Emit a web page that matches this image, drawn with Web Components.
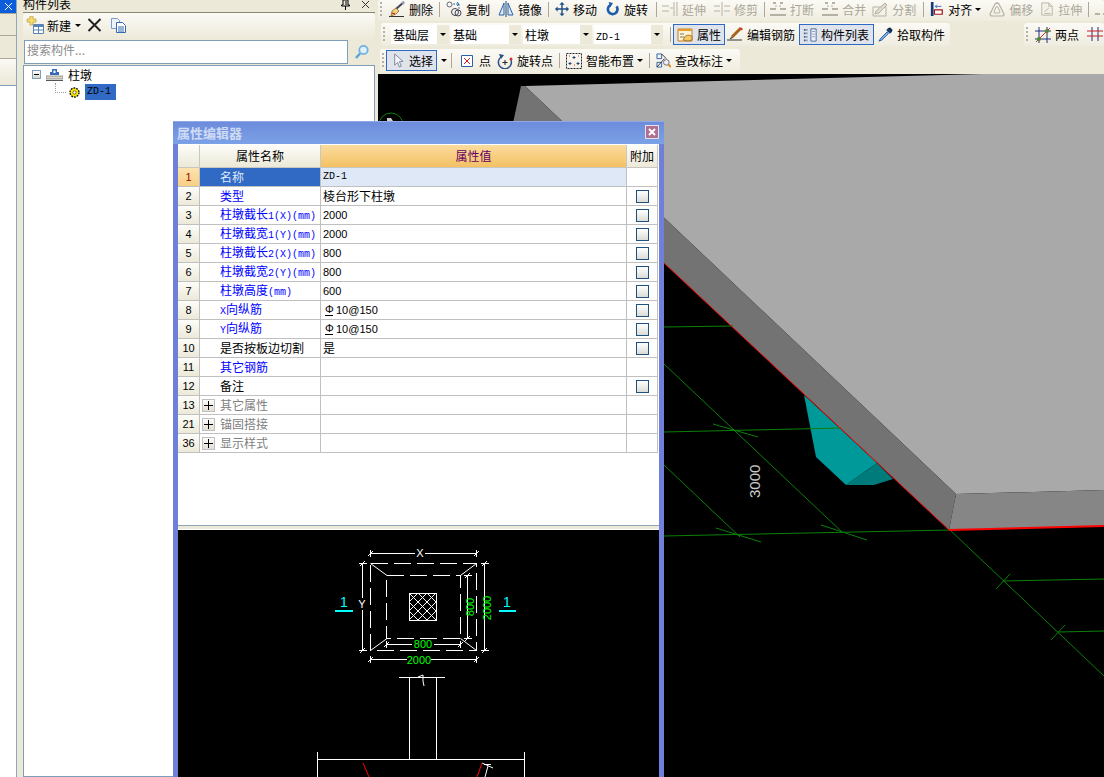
<!DOCTYPE html>
<html lang="zh">
<head>
<meta charset="utf-8">
<title>属性编辑器</title>
<style>
  html, body { margin: 0; height: 100%; overflow: hidden; background: #ece9d8; }
  body { font: 12px "Noto Sans CJK SC", "Liberation Sans", sans-serif; color: #000; }
</style>
</head>
<body>
<app-shell>
  <side-strip slot="strip"></side-strip>
  <tree-panel slot="tree"></tree-panel>
  <main-area slot="main">
    <tool-row style="margin-bottom:2px">
      <tool-bar style="flex:1;height:21px;padding-bottom:3px">
        <tool-btn icon="erase" label="删除"></tool-btn><tool-sep></tool-sep>
        <tool-btn icon="copy" label="复制"></tool-btn>
        <tool-btn icon="mirror" label="镜像"></tool-btn><tool-sep></tool-sep>
        <tool-btn icon="move" label="移动" iw="14"></tool-btn>
        <tool-btn icon="rotate" label="旋转" iw="14" style="margin-left:1px"></tool-btn><tool-sep style="margin:0 1px 0 4px"></tool-sep>
        <tool-btn icon="extend" label="延伸" off></tool-btn>
        <tool-btn icon="trim" label="修剪" off></tool-btn><tool-sep></tool-sep>
        <tool-btn icon="cut" label="打断" off style="margin-left:-1px"></tool-btn>
        <tool-btn icon="cut" label="合并" off></tool-btn>
        <tool-btn icon="split" label="分割" off style="margin-left:-2px"></tool-btn><tool-sep style="margin-left:3px"></tool-sep>
        <tool-btn icon="align" label="对齐" iw="14" caret></tool-btn>
        <tool-btn icon="offset" label="偏移" off></tool-btn>
        <tool-btn icon="stretch" label="拉伸" iw="14" off style="margin-left:-1px"></tool-btn><tool-sep></tool-sep>
        <tool-btn icon="stub" off></tool-btn>
      </tool-bar>
    </tool-row>
    <tool-row style="margin-bottom:3px">
      <tool-bar style="width:569px;height:23px;margin-left:3px">
        <tb-combo text="基础层" w="46"></tb-combo>
        <tb-combo text="基础" w="58"></tb-combo>
        <tb-combo text="柱墩" w="57"></tb-combo>
        <tb-combo text="ZD-1" w="57"></tb-combo>
        <tool-sep style="margin:0 2px 0 5px"></tool-sep>
        <tool-btn icon="attr" label="属性" on></tool-btn>
        <tool-btn icon="rebar" label="编辑钢筋" style="margin-left:-2px"></tool-btn>
        <tool-btn icon="list" label="构件列表" iw="14" on style="width:75px"></tool-btn>
        <tool-btn icon="pick" label="拾取构件" iw="15"></tool-btn>
      </tool-bar>
      <tool-bar style="margin-left:74px;flex:1;height:23px">
        <tool-btn icon="twopt" label="两点"></tool-btn>
        <tool-btn icon="grid" label=""></tool-btn>
      </tool-bar>
    </tool-row>
    <tool-row style="margin-bottom:1px">
      <tool-bar style="width:360px;height:24px;margin-left:2px;padding-bottom:1px">
        <tool-btn icon="arrow" label="选择" on iw="15" style="margin-left:-1px"></tool-btn>
        <span style="width:0;height:0;margin:0 2px 0 4px;border:solid transparent;border-width:3px 3px 0;border-top-color:#000"></span>
        <tool-sep></tool-sep>
        <tool-btn icon="point" label="点" style="margin-left:1px"></tool-btn>
        <tool-btn icon="rotpt" label="旋转点" style="margin-left:-2px"></tool-btn><tool-sep></tool-sep>
        <tool-btn icon="smart" label="智能布置" caret></tool-btn><tool-sep></tool-sep>
        <tool-btn icon="inspect" label="查改标注" iw="15" caret></tool-btn>
      </tool-bar>
    </tool-row>
    <cad-view></cad-view>
  </main-area>
  <prop-dialog slot="dialog" title="属性编辑器">
    <prop-row num="1" name="名称" val="ZD-1" tone="sel"></prop-row>
    <prop-row num="2" name="类型" val="棱台形下柱墩" tone="link" check></prop-row>
    <prop-row num="3" name="柱墩截长1(X)(mm)" val="2000" tone="link" check></prop-row>
    <prop-row num="4" name="柱墩截宽1(Y)(mm)" val="2000" tone="link" check></prop-row>
    <prop-row num="5" name="柱墩截长2(X)(mm)" val="800" tone="link" check></prop-row>
    <prop-row num="6" name="柱墩截宽2(Y)(mm)" val="800" tone="link" check></prop-row>
    <prop-row num="7" name="柱墩高度(mm)" val="600" tone="link" check></prop-row>
    <prop-row num="8" name="X向纵筋" val="Φ10@150" tone="link" check></prop-row>
    <prop-row num="9" name="Y向纵筋" val="Φ10@150" tone="link" check></prop-row>
    <prop-row num="10" name="是否按板边切割" val="是" check></prop-row>
    <prop-row num="11" name="其它钢筋" tone="link"></prop-row>
    <prop-row num="12" name="备注" check></prop-row>
    <prop-row num="13" name="其它属性" tone="group"></prop-row>
    <prop-row num="21" name="锚固搭接" tone="group"></prop-row>
    <prop-row num="36" name="显示样式" tone="group"></prop-row>
    <cad-preview slot="preview"></cad-preview>
  </prop-dialog>
</app-shell>

<script>
// small latin runs are 10px mono, same cell width as the old bitmap font
const latin = (s) => s.replace(/[\x21-\x7e]+/g, (m) => `<span class="l">${m}</span>`);

const gray = "#b5b2a4";
const svg16 = (body) => `<svg viewBox="0 0 16 16" width="16" height="16" fill="none">${body}</svg>`;
const ICONS = {
  erase: svg16(`<path d="M0 15.5h15" stroke="#333"/><path d="M15 1 7 8" stroke="#445" stroke-width="2"/><path d="M7 7l3 3-3 3-5 2 1-5z" fill="#f2d27a" stroke="#7a5a20" stroke-width=".7"/><path d="M3 12l3 1" stroke="#c03" /><path d="M13 1l2 2" stroke="#9ab" stroke-width="2"/>`),
  copy: svg16(`<circle cx="3.5" cy="3.5" r="2.5" stroke="#667"/><circle cx="9" cy="11" r="3.5" stroke="#445"/><circle cx="12" cy="12" r="3" stroke="#445"/><path d="M7 3h6M13 3v5" stroke="#37a" stroke-dasharray="2 1"/><path d="M11 1l2 2-2 2" stroke="#37a"/>`),
  mirror: svg16(`<path d="M8 0v16" stroke="#246"/><path d="M6 2v12H1z" stroke="#2a62a8" fill="#dfe9f6"/><path d="M10 2v12h5z" stroke="#2a62a8" fill="#dfe9f6"/>`),
  move: svg16(`<path d="M8 1v14M1 8h14" stroke="#1f4f86" stroke-width="1.6"/><path d="M8 0l3 3H5zM8 16l3-3H5zM0 8l3-3v6zM16 8l-3-3v6z" fill="#1f4f86"/>`),
  rotate: svg16(`<path d="M5 3.5A5.5 5.5 0 1 0 12 5" stroke="#1c5cab" stroke-width="3"/><path d="M3 0l5 1-3 5z" fill="#1c5cab"/>`),
  extend: svg16(`<path d="M0 5h7M0 10h7M12 1v14M15 1v14M8 7h3" stroke="${gray}"/>`),
  trim: svg16(`<path d="M0 5h6M0 10h6M10 5h6M10 10h6M8 1v14" stroke="${gray}"/>`),
  cut: svg16(`<path d="M0 8h6M10 8h6M0 14h16" stroke="${gray}" stroke-width="2"/><path d="M3 2h3M10 2h3" stroke="${gray}" stroke-width="2"/><path d="M6 4v2M10 4v2" stroke="${gray}"/>`),
  split: svg16(`<path d="M1 6h13v9H1z" stroke="${gray}"/><path d="M4 10 13 2l2 2-8 8-4 1z" fill="#dedbcc" stroke="${gray}"/>`),
  align: svg16(`<path d="M1 0h3v16H1z" fill="#123a78"/><path d="M5 14V9h9v5z" fill="#fff" stroke="#a01818" stroke-width="1.4"/><path d="M13 5H6M8 3 6 5l2 2" stroke="#2a62c8"/>`),
  offset: svg16(`<path d="M1 13 6 3q2-2 4 0l5 10q0 2-2 2H3q-2 0-2-2z" stroke="${gray}" stroke-width="1.2"/><path d="M5 11 7 6q1-1 2 0l2 5q0 1-1 1H6q-1 0-1-1z" stroke="${gray}"/>`),
  stretch: svg16(`<path d="M2 1h8l4 4v10H2z" fill="#f4f2e8" stroke="${gray}"/><path d="M10 1v4h4M5 11l5-4M5 13h7" stroke="${gray}"/>`),
  stub: svg16(`<path d="M0 13h5M8 13h2" stroke="${gray}" stroke-width="2"/>`),
  attr: svg16(`<path d="M1 2h14v12H1z" fill="#fdf3d7" stroke="#c77a1c"/><path d="M1 2h14v2H1z" fill="#e99c2e"/><path d="M3 7h4M3 10h4" stroke="#777"/><path d="M6 13q2-5 5-5l4 1v4l-4 1z" fill="#f4c964" stroke="#8a5a10" stroke-width=".7"/>`),
  rebar: svg16(`<path d="M0 13h15" stroke="#333"/><path d="M14 1 5 10" stroke="#a8641e" stroke-width="3"/><path d="M14 1l1 2" stroke="#d33" stroke-width="2"/><path d="M3 11l2-1 1 1-3 1z" fill="#222"/>`),
  list: svg16(`<path d="M9 1h6v14H9z" fill="#eef3fa" stroke="#3b5f93"/><path d="M1 2h4M1 6h4M1 10h4M1 14h4" stroke="#3b5f93" stroke-width="2" stroke-dasharray="2 1"/><path d="M10.500 4h3M10.500 7h3M10.500 10h3" stroke="#88a"/>`),
  pick: svg16(`<path d="M10 2 14 6" stroke="#0f3f7a" stroke-width="3.4"/><path d="M10 5 3 12l-2 3 3-1 7-7z" fill="#8ab4ea" stroke="#1f57a3"/><path d="M12 1l3 3" stroke="#222" stroke-width="2"/>`),
  twopt: svg16(`<path d="M4 0v16M12 0v16M0 4h16M0 12h16" stroke="#23317a"/><path d="M1 15 15 1" stroke="#d22"/><circle cx="4" cy="12" r="2" fill="#4c8a2e"/><circle cx="12" cy="4" r="2" fill="#4c8a2e"/>`),
  grid: svg16(`<path d="M5 0v14M11 0v14" stroke="#23317a"/><path d="M0 4h16M0 9h16" stroke="#c81e2a"/>`),
  arrow: svg16(`<path d="M5 1v12l3-3 2 5 2-1-2-5h4z" fill="#f3f5fa" stroke="#7b8496"/>`),
  point: svg16(`<path d="M2.500 2.500h11v11h-11z" fill="#fff" stroke="#2a62a8"/><path d="M5 5l6 6M11 5l-6 6" stroke="#d3202a"/>`),
  rotpt: svg16(`<path d="M4 4A6.500 6.500 0 1 0 14 7" stroke="#2a4f86" stroke-width="1.5"/><path d="M2 1l5 1-3 4z" fill="#2a4f86"/><path d="M8 7v5M5.500 9.500h5" stroke="#222"/><circle cx="14" cy="6" r="1.500" fill="#c33"/>`),
  smart: svg16(`<path d="M.5.500h15v15H.5z" stroke="#223" stroke-dasharray="2 1"/><path d="M8 3v3M6.500 4.500h3M4 9v3M2.500 10.500h3M12 9v3M10.500 10.500h3" stroke="#246"/><path d="M3 3h1M12 3h1M8 12h1" stroke="#c33"/>`),
  inspect: svg16(`<path d="M1 1h5v5H1zM1 10h5v5H1z" stroke="#2a62a8"/><path d="M6 1 11 6M1 15 9 6" stroke="#333"/><circle cx="11" cy="10" r="3" fill="#eef" stroke="#667"/><path d="M13 12l3 3" stroke="#d08a20" stroke-width="2"/>`),
};

class AppShell extends HTMLElement {
  constructor() {
    super();
    this.attachShadow({ mode: "open" }).innerHTML = `
      <style>
        :host { display: grid; grid-template-columns: 17px 6px 352px 3px 726px; width: 1104px; height: 777px; position: relative; overflow: hidden; background: #ece9d8; }
        .col { min-height: 0; height: 777px; overflow: hidden; }
        .dlg { position: absolute; left: 173px; top: 121px; }
      </style>
      <div class="col"><slot name="strip"></slot></div><div></div>
      <div class="col"><slot name="tree"></slot></div><div></div>
      <div class="col"><slot name="main"></slot></div>
      <div class="dlg"><slot name="dialog"></slot></div>`;
  }
}

class SideStrip extends HTMLElement {
  constructor() {
    super();
    this.attachShadow({ mode: "open" }).innerHTML = `
      <style>
        :host { display: flex; flex-direction: column; height: 777px; border-right: 1px solid #8fa8c0; box-sizing: border-box; }
        .x { height: 13px; background: #0b5ddc; color: #fff; display: flex; align-items: center; justify-content: center; }
        .tab { border-top: 1px solid #aca899; height: 21px; background: #ece9d8; box-sizing: content-box; }
        .tab3 { height: 26px; background: linear-gradient(#faf9f4, #ece9d8); }
        .rest { flex: 1; background: #fff; border-top: 1px solid #7f9db9; }
      </style>
      <div class="x"><svg width="9" height="9" viewBox="0 0 9 9"><path d="M1 1l7 7M8 1 1 8" stroke="#fff"/></svg></div>
      <div class="tab"></div><div class="tab" style="height:22px"></div>
      <div class="tab tab3"></div><div class="rest"></div>`;
  }
}

class TreePanel extends HTMLElement {
  constructor() {
    super();
    this.attachShadow({ mode: "open" }).innerHTML = `
      <style>
        :host { display: flex; flex-direction: column; height: 777px; }
        .head { height: 12px; overflow: hidden; border-bottom: 1px solid #8a8778; display: flex; justify-content: space-between; }
        .head span { margin-top: -4px; line-height: 16px; }
        .head div { display: flex; gap: 11px; padding-right: 5px; align-items: flex-start; }
        .bar { height: 27px; display: flex; align-items: center; padding: 0 0 3px 3px; box-sizing: border-box; background: linear-gradient(#fbfaf5, #ece9d8); border-radius: 4px 4px 0 0; }
        .bar span.t { margin: 0 4px 0 2px; }
        .caret { border: solid transparent; border-width: 3px 3px 0; border-top-color: #000; margin-right: 6px; }
        .search { height: 24px; display: flex; }
        .search .in { width: 324px; margin-left: 1px; box-sizing: border-box; border: 1px solid #7f9db9; background: #fff; color: #8c8c8c; padding: 0 2px; line-height: 18px; }
        .search .go { flex: 1; display: flex; align-items: center; justify-content: center; }
        .tree { flex: 1; margin-top: 1px; border: 1px solid #7f9db9; background: #fff; }
        .n { display: flex; align-items: center; height: 16px; }
        .n1 { margin-top: 1px; padding-left: 8px; height: 17px; }
        .n1 span { margin-top: -3px; }
        .box { width: 7px; height: 7px; border: 1px solid #7f9db9; background: linear-gradient(#fff, #d8d8cc); display: flex; align-items: center; justify-content: center; margin-top: -2px; }
        .box i { width: 5px; height: 1px; background: #000; }
        .n1 svg { margin: -3px 4px 0 5px; }
        .dots { width: 10px; height: 9px; margin: -9px 4px 0 31px; border: dotted #999; border-width: 0 0 1px 1px; }
        .sel { margin-left: 5px; width: 31px; height: 16px; background: #316ac5; padding-left: 2px; box-sizing: border-box; font: 10px/16px "Liberation Mono", monospace; }
      </style>
      <div class="head"><span>构件列表</span><div>
        <svg width="9" height="10" viewBox="0 0 9 10"><path d="M2 0h5v5h1.500v1h-8V5H2zM4.500 6v4M5 1v4" stroke="#000" fill="none"/></svg>
        <svg width="9" height="9" viewBox="0 0 9 9"><path d="M1 1l7 7M8 1 1 8" stroke="#333"/></svg>
      </div></div>
      <div class="bar">
        <svg width="18" height="18" viewBox="0 0 18 18"><path d="M4 0h3v3h3v3H7v3H4V6H1V3h3z" fill="#f7dc6a" stroke="#b09030" stroke-width=".6"/><path d="M7.500 8.500h10v9h-10z" fill="#fff" stroke="#5b83b5"/><path d="M8 9h9v2H8z" fill="#5b83b5"/><path d="M8 14h9M12.500 11v6" stroke="#5b83b5"/></svg>
        <span class="t" style="margin-left:3px">新建</span><span class="caret"></span>
        <svg width="15" height="14" viewBox="0 0 15 14" style="margin-right:9px"><path d="M1.500 1 13.500 13M13.500 1 1.500 13" stroke="#222" stroke-width="2"/></svg>
        <svg width="15" height="15" viewBox="0 0 15 15"><path d="M.5.500h6l2 2v8h-8z" fill="#eef3fb" stroke="#7a9bc9"/><path d="M5.500 4.500h6l3 3v7h-9z" fill="#fff" stroke="#3568b0"/><path d="M7 9h6M7 11h6M7 13h6" stroke="#3568b0"/></svg>
      </div>
      <div class="search"><div class="in">搜索构件...</div><div class="go">
        <svg width="16" height="16" viewBox="0 0 16 16"><circle cx="9.500" cy="6" r="4.200" fill="#dff0fb" stroke="#6fb0e2" stroke-width="1.800"/><path d="M6 9.500 2 14" stroke="#5ea2dc" stroke-width="2.400"/></svg>
      </div></div>
      <div class="tree">
        <div class="n n1"><div class="box"><i></i></div>
          <svg width="17" height="13" viewBox="0 0 17 13"><path d="M6 1h5v3h2v3H4V4h2z" fill="#3a68b8"/><path d="M7.500 2.500h2V5h-2z" fill="#fff"/><path d="M0 8h17v3H0z" fill="#d9d6c6" stroke="#777" stroke-width=".7"/><path d="M0 12.500h17" stroke="#555"/></svg>
          <span style="margin-left:1px">柱墩</span></div>
        <div class="n"><span class="dots"></span>
          <svg width="11" height="11" viewBox="0 0 11 11" style="margin-left:-1px"><circle cx="5.500" cy="5.500" r="4.500" fill="#ffe800" stroke="#111" stroke-width="1.400" stroke-dasharray="1.800 1"/><circle cx="5.500" cy="5.500" r="1.600" fill="#fff" stroke="#333" stroke-width=".7"/></svg>
          <span class="sel">ZD-1</span></div>
      </div>`;
  }
}

class MainArea extends HTMLElement {
  constructor() {
    super();
    this.attachShadow({ mode: "open" }).innerHTML = `
      <style>:host { display: flex; flex-direction: column; height: 777px; } </style><slot></slot>`;
  }
}

class ToolRow extends HTMLElement {
  constructor() {
    super();
    this.attachShadow({ mode: "open" }).innerHTML = `
      <style>:host { display: flex; align-items: stretch; }</style><slot></slot>`;
  }
}

class ToolBar extends HTMLElement {
  constructor() {
    super();
    this.attachShadow({ mode: "open" }).innerHTML = `
      <style>
        :host { display: flex; align-items: center; box-sizing: border-box; background: linear-gradient(#fbfaf5, #efecdf); border-radius: 3px; overflow: hidden; white-space: nowrap; }
        .grip { width: 2px; height: 15px; margin: 0 3px 0 2px; flex: none; background: repeating-linear-gradient(#b5b2a4 0 2px, transparent 2px 4px); }
      </style>
      <div class="grip"></div><slot></slot>`;
  }
}

class ToolSep extends HTMLElement {
  constructor() {
    super();
    this.attachShadow({ mode: "open" }).innerHTML = `
      <style>:host { display: block; flex: none; width: 1px; height: 15px; margin: 0 2px; background: #aca899; }</style>`;
  }
}

class ToolBtn extends HTMLElement {
  connectedCallback() {
    if (this.shadowRoot) return;
    const label = this.getAttribute("label");
    const iw = this.getAttribute("iw") || 16;
    this.attachShadow({ mode: "open" }).innerHTML = `
      <style>
        :host { display: flex; flex: none; align-items: center; gap: 4px; padding: 0 4px; box-sizing: border-box; height: 21px; line-height: 21px; }
        :host([off]) { color: #aca899; }
        :host([on]) { border: 1px solid #2e6ac4; background: #dfe4ec; padding: 0 3px; }
        svg { display: block; flex: none; width: ${iw}px; height: ${iw}px; }
        .caret { width: 0; height: 0; border: solid transparent; border-width: 3px 3px 0; border-top-color: #000; margin-left: -1px; }
      </style>
      ${ICONS[this.getAttribute("icon")] || ""}
      ${label ? `<span>${label}</span>` : ""}
      ${this.hasAttribute("caret") ? '<span class="caret"></span>' : ""}`;
  }
}

class TbCombo extends HTMLElement {
  connectedCallback() {
    if (this.shadowRoot) return;
    this.attachShadow({ mode: "open" }).innerHTML = `
      <style>
        :host { display: flex; flex: none; height: 19px; margin-right: 2px; line-height: 19px; }
        :host(:first-of-type) { margin-left: 3px; }
        .t { background: #fff; padding-left: 2px; box-sizing: border-box; }
        .l { font: 10px/19px "Liberation Mono", monospace; }
        .d { width: 12px; background: #ece9d8; display: flex; align-items: center; justify-content: center; }
        .d i { border: solid transparent; border-width: 3px 3px 0; border-top-color: #000; }
      </style>
      <div class="t" style="width:${this.getAttribute("w")}px">${latin(this.getAttribute("text"))}</div>
      <div class="d"><i></i></div>`;
  }
}

class CadView extends HTMLElement {
  constructor() {
    super();
    this.attachShadow({ mode: "open" }).innerHTML = `
      <style>:host { display: block; flex: 1; background: #000; overflow: hidden; } svg { display: block; }</style>
      <svg width="726" height="703" viewBox="378 74 726 703">
        <polygon points="525,86 1020,73 1104,73 1104,490 956,494" fill="#a9a9a9"/>
        <polygon points="521,86 525,86 956,494 949,530 664,263 505,160" fill="#737373"/>
        <polygon points="956,494 1104,490 1104,526 949,530" fill="#868686"/>
        <polygon points="804,395 816,457 846,485 877,463" fill="#009999"/>
        <polygon points="846,485 874,485 893,479 877,463" fill="#007b7b"/>
        <g stroke="#0a800a" fill="none">
          <path d="M664 327 733 326M664 432 841 428M664 536 950 530"/>
          <path d="M664 364 842 532M664 465 740 537M950 530 1104 676"/>
          <path d="M713 424 758 437M716 528 761 542M821 525 867 540"/>
          <path d="M996 589 1010 574M1003 581 1104 579M1051 640 1065 625M1058 632 1104 631"/>
          <circle cx="391" cy="125" r="12"/>
        </g>
        <path d="M387 118h4l2 3h-6z" fill="#ccc"/>
        <path d="M664 263 949 530" stroke="#f00" fill="none"/>
        <path d="M949 530 1104 526" stroke="#f00" stroke-width="2" fill="none"/>
        <text transform="translate(760 498) rotate(-90)" font-family="Liberation Sans" font-size="15" fill="#ccc">3000</text>
      </svg>`;
  }
}

class CadPreview extends HTMLElement {
  constructor() {
    super();
    this.attachShadow({ mode: "open" }).innerHTML = `
      <style>
        :host { display: block; height: 247px; background: #000; overflow: hidden; }
        svg { display: block; }
        text { font-family: "Liberation Sans", sans-serif; font-size: 11px; text-anchor: middle; }
      </style>
      <svg width="481" height="247" viewBox="178 530 481 247">
        <defs><pattern id="hatch" width="9" height="9" patternUnits="userSpaceOnUse" patternTransform="translate(409 593)">
          <path d="M0 0 9 9M9 0 0 9" stroke="#fff"/></pattern></defs>
        <g stroke="#fff" fill="none" shape-rendering="crispEdges">
          <rect x="370.500" y="563.500" width="106" height="87" stroke-dasharray="17 6"/>
          <rect x="386.500" y="575.500" width="74" height="63" stroke-dasharray="17 6"/>
          <rect x="409.500" y="593.500" width="27" height="27" fill="url(#hatch)"/>
          <path d="M370.500 553.500H415M425 553.500H476.500M370.500 550V557M476.500 550V557"/>
          <path d="M362.500 563.500V598M362.500 610V650.500M359 563.500H367M359 650.500H367"/>
          <path d="M484.500 563.500V650.500M481 563.500H489M481 650.500H489"/>
          <path d="M467.500 575.500V638.500M464 575.500H472M464 638.500H472"/>
          <path d="M386.500 644.500H412M434 644.500H460.500M386.500 641V648M460.500 641V648"/>
          <path d="M370.500 659.500H407M431 659.500H476.500M370.500 656V663M476.500 656V663"/>
          <path d="M399 677.500H445M409.500 677.500V759.500M436.500 677.500V759.500M317.500 759.500H524.500M317.500 752V777M524.500 752V777"/>
          <path d="M484 764H491M317 777H322M520 777H527"/>
        </g>
        <g stroke="#fff" fill="none">
          <path d="M370.500 563.500 387 575.500M476.500 563.500 460.500 575.500M370.500 650.500 387 638.500M476.500 650.500 460.500 638.500"/>
          <path d="M368 556 373 551M474 556 479 551M360 566 365 561M360 653 365 648M482 566 487 561M482 653 487 648"/>
          <path d="M465 578 470 573M465 641 470 636M384 647 389 642M458 647 463 642M368 662 373 657M474 662 479 657"/>
          <path d="M418 677 423 675 423 681 424 686M482 763 493 768M488 766 485 777"/>
        </g>
        <path d="M363 763 369 777M482 763 477 777" stroke="#f00" fill="none"/>
        <path d="M335 611H353M499 611H516" stroke="#0ff" stroke-width="2"/>
        <g fill="#0ff"><text x="344" y="607" style="font-size:14px">1</text><text x="507" y="607" style="font-size:14px">1</text></g>
        <g fill="#fff"><text x="420" y="557">X</text><text x="362" y="608">Y</text></g>
        <g fill="#0f0">
          <text x="423" y="648">800</text><text x="419" y="664">2000</text>
          <text transform="translate(474 607) rotate(-90)">800</text>
          <text transform="translate(491 608) rotate(-90)">2000</text>
        </g>
      </svg>`;
  }
}

class PropDialog extends HTMLElement {
  connectedCallback() {
    if (this.shadowRoot) return;
    this.attachShadow({ mode: "open" }).innerHTML = `
      <style>
        :host { display: flex; flex-direction: column; width: 491px; height: 656px; box-sizing: border-box; border: solid #7080d8; border-width: 0 5px; }
        .title { height: 23px; margin: 0 -5px; flex: none; display: flex; align-items: center; justify-content: space-between; padding: 0 5px 2px 4px; background: linear-gradient(#6d8cdc, #7ba1e6); border-top: 1px solid #8ea8e8; box-sizing: border-box; color: #cfdaf4; font-weight: 700; font-size: 13px; }
        .close { width: 12px; height: 12px; background: #b0708f; border: 1px solid #e4e4f0; display: flex; align-items: center; justify-content: center; }
        .body { flex: 1; background: #fff; padding-top: 1px; display: flex; flex-direction: column; }
        .hd { display: grid; grid-template-columns: 22px 121px 306px 31px; height: 23px; line-height: 21px; text-align: center; }
        .hd div { border: solid #c8c8c0; border-width: 0 1px 1px 0; background: linear-gradient(#fdfdf9, #ece9d8); }
        .hd .v { background: linear-gradient(#fbdc9e, #f3c163); color: #660066; }
        .split { flex: none; height: 5px; border-top: 1px solid #8fa6b8; background: #ece9d8; border-bottom: 1px solid #fff; box-sizing: border-box; }
      </style>
      <div class="title"><span>${this.getAttribute("title")}</span>
        <div class="close"><svg width="8" height="8" viewBox="0 0 8 8"><path d="M1 1l6 6M7 1 1 7" stroke="#fff" stroke-width="2"/></svg></div></div>
      <div class="body">
        <div class="hd"><div></div><div>属性名称</div><div class="v">属性值</div><div>附加</div></div>
        <slot></slot>
      </div>
      <div class="split"></div>
      <slot name="preview"></slot>`;
  }
}

class PropRow extends HTMLElement {
  connectedCallback() {
    if (this.shadowRoot) return;
    const tone = this.getAttribute("tone") || "";
    const val = this.getAttribute("val") || "";
    const group = tone === "group";
    const valHtml = val.startsWith("Φ")
      ? `<span class="phi">Φ</span>${latin(val.slice(1))}`
      : latin(val);
    this.attachShadow({ mode: "open" }).innerHTML = `
      <style>
        :host { display: grid; grid-template-columns: 22px 121px 306px 31px; width: 480px; height: 19px; line-height: 18px; }
        .c { border: solid #c0c0c0; border-width: 0 1px 1px 0; box-sizing: border-box; overflow: hidden; white-space: nowrap; min-width: 0; display: flex; align-items: center; }
        .l { font: 10px/18px "Liberation Mono", monospace; }
        .num { justify-content: center; background: linear-gradient(#fdfdf9, #ece9d8); font: 11px "Liberation Sans", sans-serif; }
        .num.sel { background: linear-gradient(#fde3ae, #f7cf85); color: #a00000; }
        .name { padding-left: 20px; }
        .name.link { color: #0000ff; }
        .name.sel { background: #316ac5; color: #dfe8f6; }
        .name.group { padding-left: 2px; color: #808080; }
        .val { padding-left: 2px; }
        .val .l { font: 11px/18px "Liberation Sans", sans-serif; }
        .val.sel { background: #dfe8f6; }
        .val.sel .l { font: 10px/20px "Liberation Mono", monospace; }
        .plus { width: 11px; height: 11px; border: 1px solid #c0c0c0; background: linear-gradient(#fdfdfb, #e2dfd2); margin-right: 5px; display: flex; align-items: center; justify-content: center; }
        .phi { font: 11px/11px "Liberation Sans", sans-serif; margin: 0 3px 0 2px; border-bottom: 1px solid #000; height: 11px; width: 8px; text-align: center; }
        .add { justify-content: center; padding-left: 1px; }
        .chk { width: 13px; height: 13px; box-sizing: border-box; border: 1px solid #1c5180; background: linear-gradient(#fff, #dcdcd4); margin-left: -1px; }
      </style>
      <div class="c num ${tone === "sel" ? "sel" : ""}">${this.getAttribute("num")}</div>
      <div class="c name ${tone}">${group ? '<span class="plus"><svg width="9" height="9" viewBox="0 0 9 9"><path d="M4.500 0v9M0 4.500h9" stroke="#000"/></svg></span>' : ""}<span>${latin(this.getAttribute("name"))}</span></div>
      <div class="c val ${tone === "sel" ? "sel" : ""}">${valHtml}</div>
      <div class="c add">${this.hasAttribute("check") ? '<div class="chk"></div>' : ""}</div>`;
  }
}

customElements.define("app-shell", AppShell);
customElements.define("side-strip", SideStrip);
customElements.define("tree-panel", TreePanel);
customElements.define("main-area", MainArea);
customElements.define("tool-row", ToolRow);
customElements.define("tool-bar", ToolBar);
customElements.define("tool-sep", ToolSep);
customElements.define("tool-btn", ToolBtn);
customElements.define("tb-combo", TbCombo);
customElements.define("cad-view", CadView);
customElements.define("cad-preview", CadPreview);
customElements.define("prop-dialog", PropDialog);
customElements.define("prop-row", PropRow);
</script>
</body>
</html>
